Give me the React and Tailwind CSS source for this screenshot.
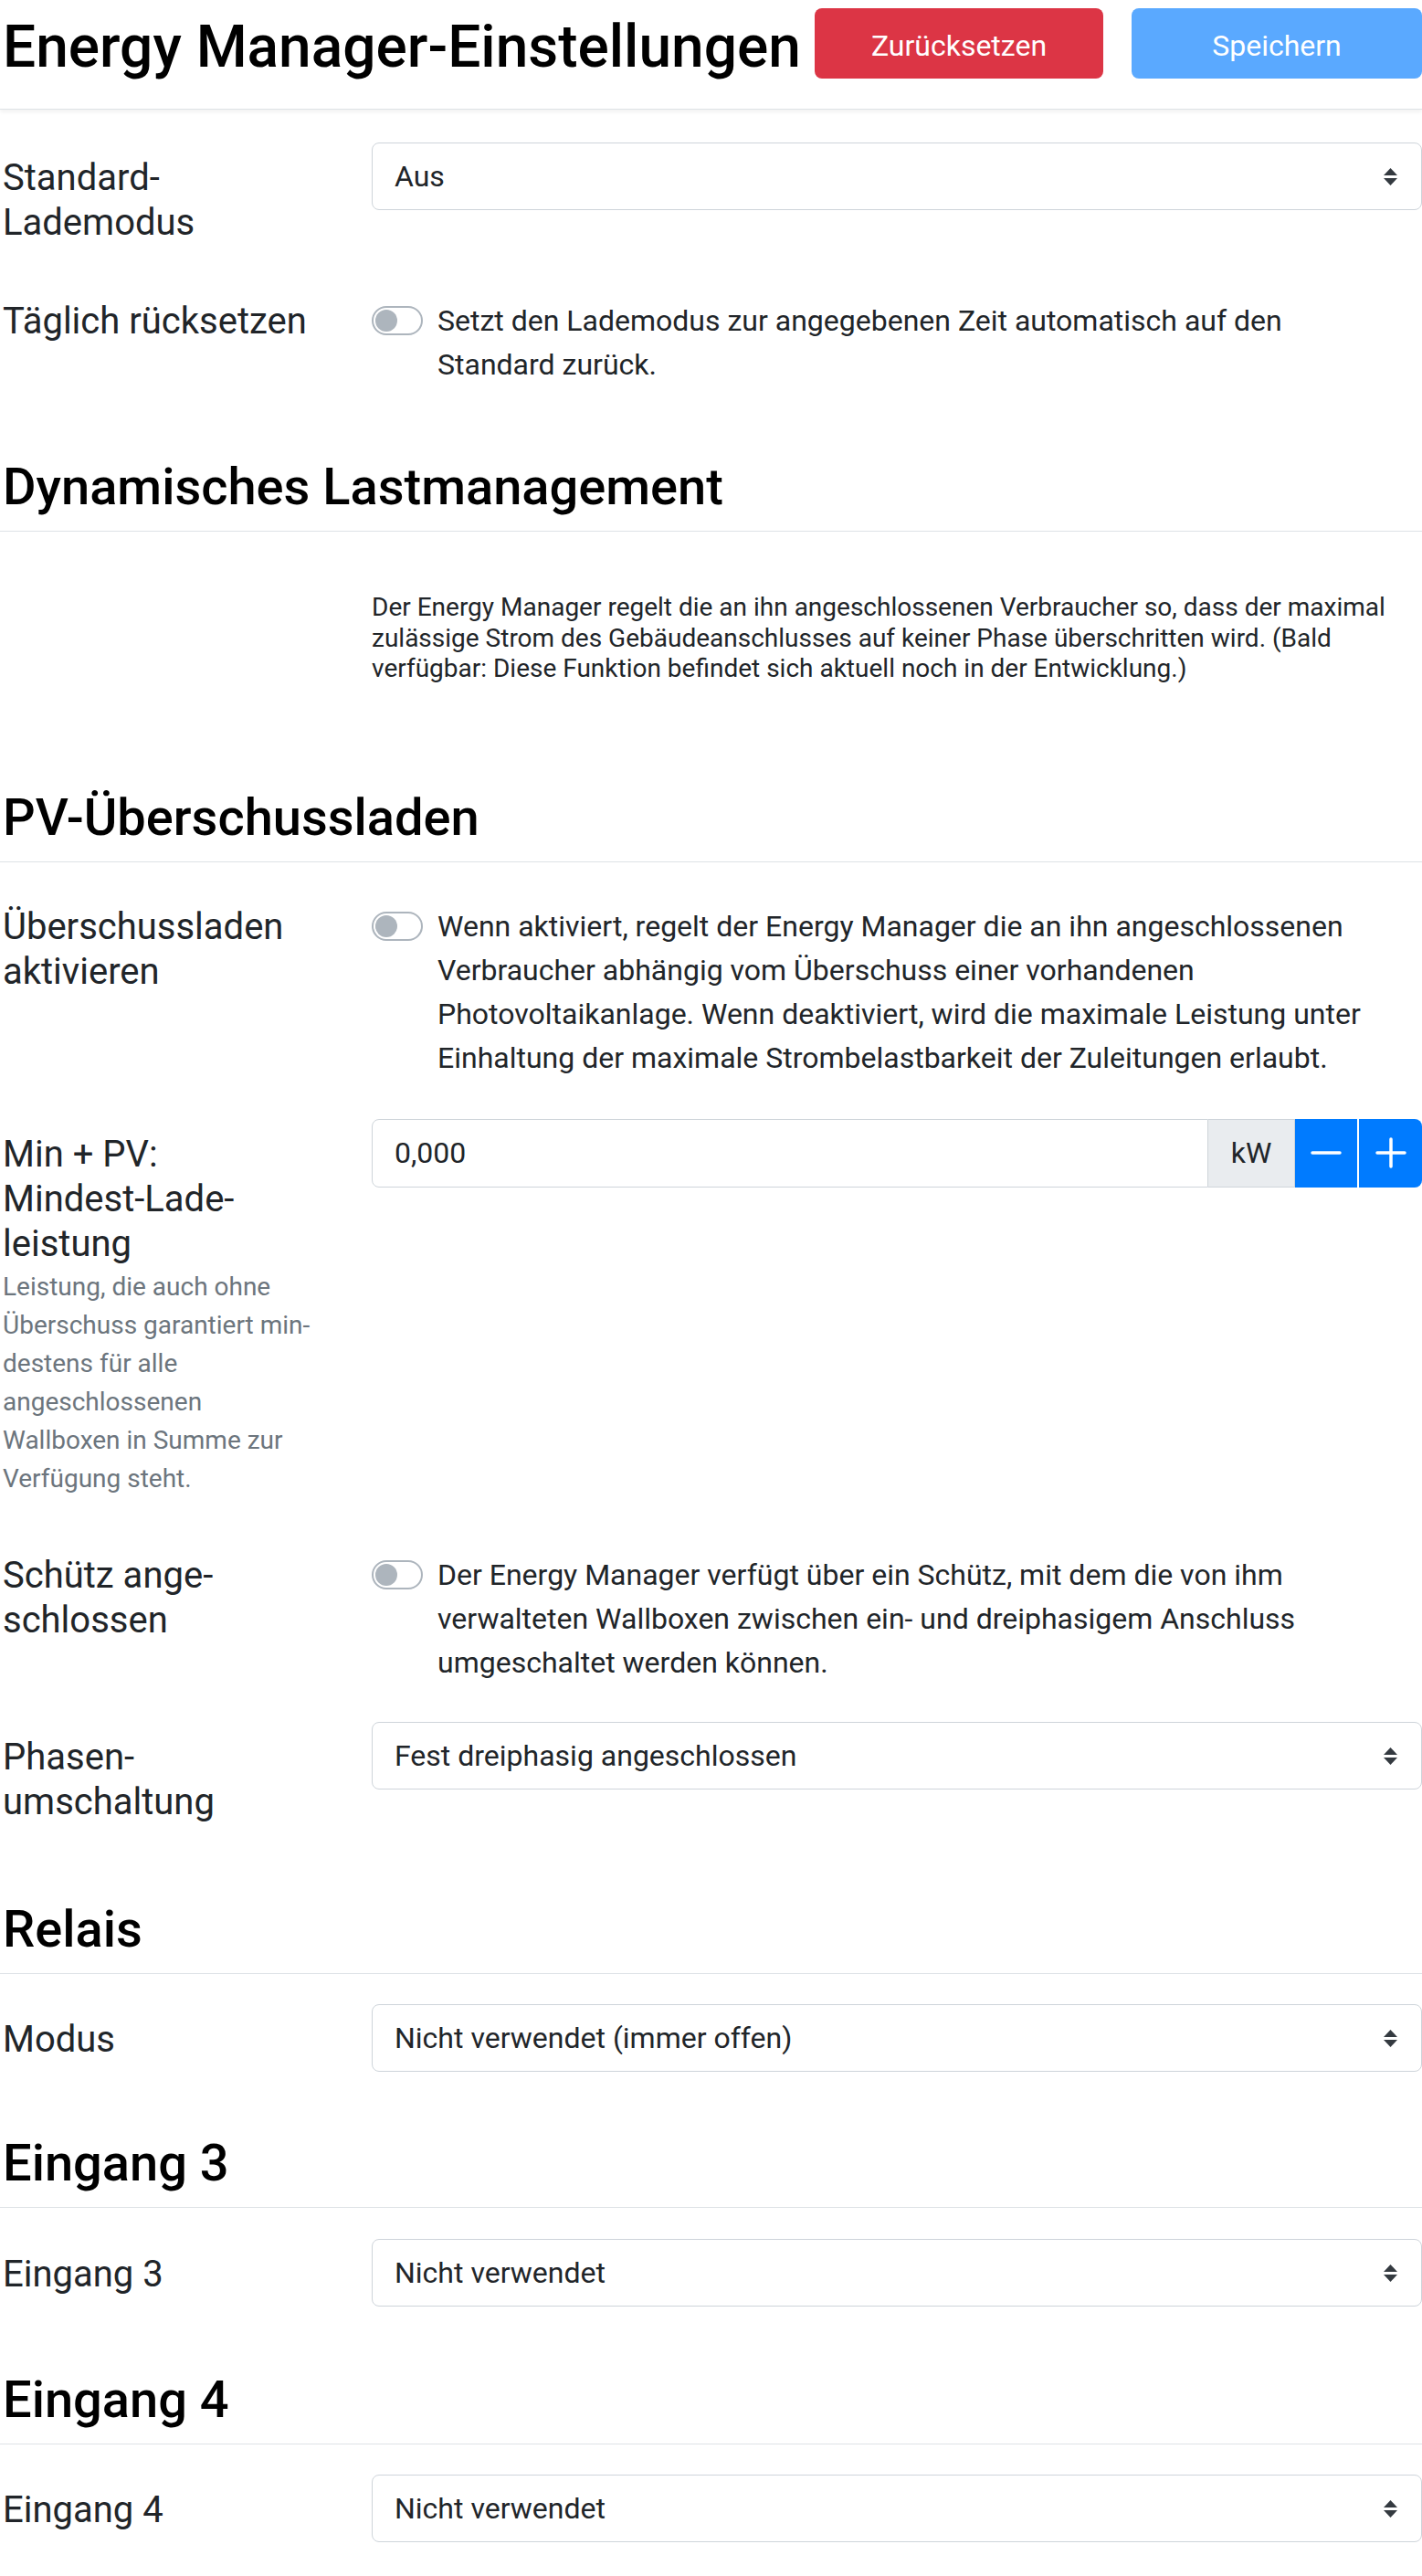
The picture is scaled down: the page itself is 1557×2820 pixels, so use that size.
import { useState } from 'react';

const font = "font-['Roboto','Liberation_Sans',sans-serif]";

const Arrows = () => (
  <svg width="15" height="19" viewBox="0 0 15 19" className="pointer-events-none absolute right-[27px] top-[28px]">
    <path d="M7.5 0L15 8H0Z" fill="#343a40" />
    <path d="M0 11H15L7.5 19Z" fill="#343a40" />
  </svg>
);

const Select = ({ value, options }) => (
  <div className="relative h-[74px]">
    <select defaultValue={value} className="block h-[74px] w-full appearance-none rounded-[8px] border border-[#ced4da] bg-white pl-[24px] pr-[60px] text-[32px] leading-[48px] text-[#212529] outline-none">
      {options.map((o) => <option key={o}>{o}</option>)}
    </select>
    <Arrows />
  </div>
);

const Toggle = ({ on, onClick }) => (
  <button type="button" onClick={onClick} className={`mt-[8px] flex h-[32px] w-[56px] shrink-0 items-center rounded-full border-2 px-[2px] ${on ? 'justify-end border-[#007bff] bg-[#007bff]' : 'border-[#adb5bd] bg-white'}`}>
    <span className={`block h-[24px] w-[24px] rounded-full ${on ? 'bg-white' : 'bg-[#adb5bd]'}`} />
  </button>
);

const Label = ({ children, top = true }) => (
  <div className={`${top ? 'pt-[14px]' : ''} text-[40px] leading-[49px] text-[#212529]`}>{children}</div>
);

const Row = ({ className = '', children }) => (
  <div className={`grid grid-cols-[404px_1fr] ${className}`}>{children}</div>
);

const Heading = ({ className = '', children }) => (
  <h2 className={`-ml-[3px] border-b border-[#dee2e6] pb-[14px] pl-[3px] text-[56px] font-medium leading-[67px] text-black ${className}`}>{children}</h2>
);

const ToggleText = ({ on, setOn, children }) => (
  <div className="flex">
    <Toggle on={on} onClick={() => setOn(!on)} />
    <p className="ml-[16px] text-[32px] leading-[48px] text-[#212529]">{children}</p>
  </div>
);

export default function App() {
  const [daily, setDaily] = useState(false);
  const [pv, setPv] = useState(false);
  const [contactor, setContactor] = useState(false);
  const [power, setPower] = useState(0);

  return (
    <div className={`${font} min-h-[2820px] w-[1557px] bg-white pl-[3px]`}>
      <header className="-ml-[3px] flex h-[120px] items-start border-b border-[#dee2e6] pl-[3px] shadow-[0_3px_4px_rgba(0,0,0,0.05)]">
        <h1 className="mt-[13px] whitespace-nowrap text-[64px] font-medium leading-[77px] text-black">Energy Manager-Einstellungen</h1>
        <div className="ml-auto mt-[9px] flex gap-[31px]">
          <button type="button" className="h-[77px] w-[316px] rounded-[8px] bg-[#dc3545] pt-[4px] text-[32px] text-white">Zurücksetzen</button>
          <button type="button" className="h-[77px] w-[318px] rounded-[8px] bg-[#5aa9ff] pt-[4px] text-[32px] text-white">Speichern</button>
        </div>
      </header>

      <Row className="mt-[36px]">
        <Label>Standard-<br />Lademodus</Label>
        <Select value="Aus" options={['Aus', 'Schnell', 'Min', 'Min + PV', 'PV']} />
      </Row>

      <Row className="mt-[59px]">
        <Label top={false}>Täglich rücksetzen</Label>
        <ToggleText on={daily} setOn={setDaily}>
          Setzt den Lademodus zur angegebenen Zeit automatisch auf den<br />Standard zurück.
        </ToggleText>
      </Row>

      <Heading className="mt-[77px]">Dynamisches Lastmanagement</Heading>

      <Row className="mt-[66px]">
        <div />
        <p className="text-[28px] leading-[33.5px] text-[#212529]">
          Der Energy Manager regelt die an ihn angeschlossenen Verbraucher so, dass der maximal<br />
          zulässige Strom des Gebäudeanschlusses auf keiner Phase überschritten wird. (Bald<br />
          verfügbar: Diese Funktion befindet sich aktuell noch in der Entwicklung.)
        </p>
      </Row>

      <Heading className="mt-[113px]">PV-Überschussladen</Heading>

      <Row className="mt-[46px]">
        <Label top={false}>Überschussladen<br />aktivieren</Label>
        <ToggleText on={pv} setOn={setPv}>
          Wenn aktiviert, regelt der Energy Manager die an ihn angeschlossenen<br />
          Verbraucher abhängig vom Überschuss einer vorhandenen<br />
          Photovoltaikanlage. Wenn deaktiviert, wird die maximale Leistung unter<br />
          Einhaltung der maximale Strombelastbarkeit der Zuleitungen erlaubt.
        </ToggleText>
      </Row>

      <Row className="mt-[43px]">
        <div>
          <Label>Min + PV:<br />Mindest-Lade-<br />leistung</Label>
          <p className="pt-[2px] text-[28px] leading-[42px] text-[#6c757d]">
            Leistung, die auch ohne<br />Überschuss garantiert min-<br />destens für alle<br />angeschlossenen<br />Wallboxen in Summe zur<br />Verfügung steht.
          </p>
        </div>
        <div className="flex h-[75px] items-stretch">
          <input
            value={power.toFixed(3).replace('.', ',')}
            readOnly
            className="w-0 min-w-0 flex-1 rounded-l-[8px] border border-[#ced4da] bg-white pl-[24px] text-[32px] text-[#212529] outline-none"
          />
          <span className="flex w-[95px] shrink-0 items-center justify-center border border-l-0 border-[#ced4da] bg-[#e9ecef] text-[32px] text-[#212529]">kW</span>
          <button type="button" onClick={() => setPower(Math.max(0, power - 0.1))} className="flex w-[68px] shrink-0 items-center justify-center bg-[#007bff]">
            <svg width="34" height="6" viewBox="0 0 34 6"><path d="M2 3H32" stroke="white" strokeWidth="3.5" strokeLinecap="round" /></svg>
          </button>
          <button type="button" onClick={() => setPower(power + 0.1)} className="ml-[2px] flex w-[69px] shrink-0 items-center justify-center rounded-r-[8px] bg-[#007bff]">
            <svg width="34" height="34" viewBox="0 0 34 34"><path d="M2 17H32M17 2V32" stroke="white" strokeWidth="3.5" strokeLinecap="round" /></svg>
          </button>
        </div>
      </Row>

      <Row className="mt-[60px]">
        <Label top={false}>Schütz ange-<br />schlossen</Label>
        <ToggleText on={contactor} setOn={setContactor}>
          Der Energy Manager verfügt über ein Schütz, mit dem die von ihm<br />
          verwalteten Wallboxen zwischen ein- und dreiphasigem Anschluss<br />
          umgeschaltet werden können.
        </ToggleText>
      </Row>

      <Row className="mt-[41px]">
        <Label>Phasen-<br />umschaltung</Label>
        <Select value="Fest dreiphasig angeschlossen" options={['Fest einphasig angeschlossen', 'Fest dreiphasig angeschlossen', 'Automatisch']} />
      </Row>

      <Heading className="mt-[82px]">Relais</Heading>

      <Row className="mt-[33px]">
        <Label>Modus</Label>
        <Select value="Nicht verwendet (immer offen)" options={['Nicht verwendet (immer offen)', 'Immer geschlossen']} />
      </Row>

      <Heading className="mt-[67px]">Eingang 3</Heading>

      <Row className="mt-[34px]">
        <Label>Eingang 3</Label>
        <Select value="Nicht verwendet" options={['Nicht verwendet', 'Lastmanagement']} />
      </Row>

      <Heading className="mt-[69px]">Eingang 4</Heading>

      <Row className="mt-[33px]">
        <Label>Eingang 4</Label>
        <Select value="Nicht verwendet" options={['Nicht verwendet', 'Lastmanagement']} />
      </Row>
    </div>
  );
}
